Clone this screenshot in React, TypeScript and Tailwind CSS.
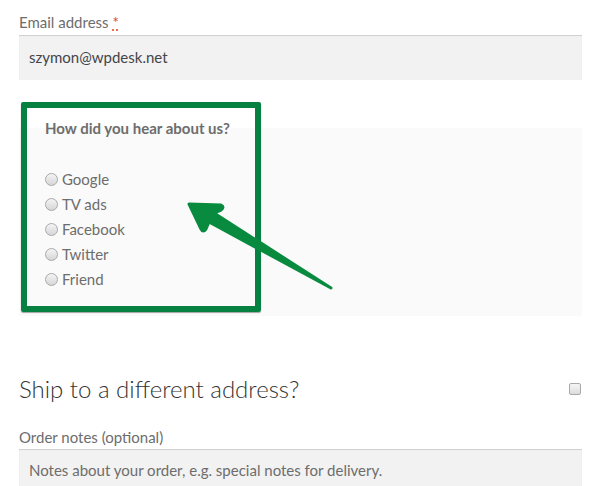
const options = ["Google", "TV ads", "Facebook", "Twitter", "Friend"];

function Radio({ label }: { label: string }) {
  return (
    <label className="flex h-[25px] items-center gap-[4px]">
      <span className="h-[13px] w-[13px] rounded-full border border-[#a9a9a9] bg-linear-to-b from-[#f4f4f4] to-[#d6d6d6]" />
      <span>{label}</span>
    </label>
  );
}

export default function App() {
  return (
    <div
      className="relative h-[486px] w-[606px] overflow-hidden bg-white text-[15px] text-[#6d6d6d]"
      style={{ fontFamily: "Lato, 'Open Sans', sans-serif" }}
    >
      <div className="w-[582px] pl-[19px] pt-[10px]">
        {/* email */}
        <div className="h-[24px] leading-[24px]">
          Email address{" "}
          <abbr className="text-[#e2401c] decoration-dotted underline-offset-2" style={{ textDecorationLine: "underline" }}>
            *
          </abbr>
        </div>
        <div className="mt-[1px] flex h-[45px] items-center bg-[#f2f2f2] px-[10px] text-[#43454b] shadow-[inset_0_1px_1px_rgba(0,0,0,0.15)]">
          szymon@wpdesk.net
        </div>

        {/* referral */}
        <fieldset className="mt-[36px] bg-[#fafafa] pb-[24px] pl-[26px]">
          <legend className="h-[24px] text-[15px] font-bold leading-[24px]">How did you hear about us?</legend>
          <div className="mt-[27px] flex flex-col">
            {options.map((o) => (
              <Radio key={o} label={o} />
            ))}
          </div>
        </fieldset>

        {/* shipping */}
        <div className="mt-[58px] flex h-[30px] items-center justify-between">
          <h3 className="text-[24px] font-light text-[#333]">Ship to a different address?</h3>
          <span className="mr-[1px] h-[12px] w-[12px] rounded-[2px] border border-[#aaa] bg-linear-to-b from-[#f6f6f6] to-[#dcdcdc]" />
        </div>

        <div className="mt-[21px] h-[24px] leading-[24px]">Order notes (optional)</div>
        <div className="h-[60px] bg-[#f2f2f2] px-[10px] pt-[10px] shadow-[inset_0_1px_1px_rgba(0,0,0,0.15)]">
          Notes about your order, e.g. special notes for delivery.
        </div>
      </div>

      {/* annotation box */}
      <div className="pointer-events-none absolute left-[21px] top-[102px] h-[210px] w-[240px] rounded-[2px] border-[6px] border-[#068141] shadow-[0_1px_1px_rgba(0,0,0,0.35)]" />

      {/* annotation arrow */}
      <svg className="pointer-events-none absolute left-0 top-0" width="606" height="486">
        <path
          d="M189 204 L221 205 Q225 207 221 210 L214 213 L331 288 L209 222 L206 229 Q203 233 201 229 Z"
          fill="#088a3f"
          stroke="#088a3f"
          strokeWidth="3"
          strokeLinejoin="round"
        />
      </svg>
    </div>
  );
}
